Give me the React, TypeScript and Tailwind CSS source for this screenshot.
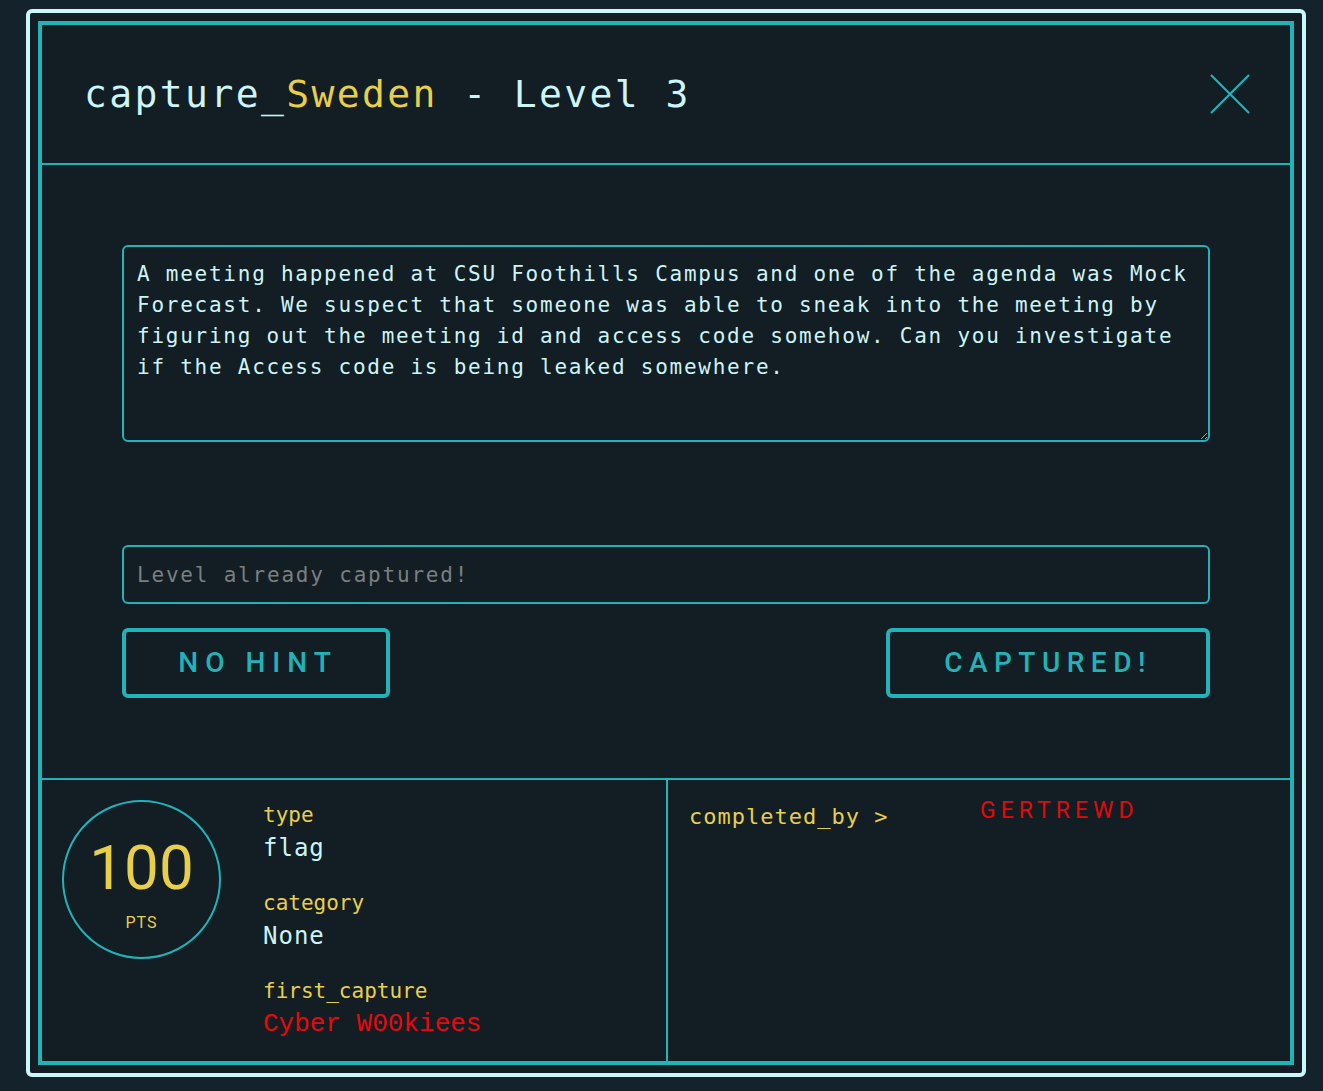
import React from "react";

const mono = "font-['DejaVu_Sans_Mono','Liberation_Mono',monospace]";
const block = "font-['Roboto','Liberation_Sans',sans-serif]";

const info = [
  { label: "type", value: "flag", cls: `${mono} text-[24px] tracking-[1px] text-[#cdf4f6]` },
  { label: "category", value: "None", cls: `${mono} text-[24px] tracking-[1px] text-[#cdf4f6]` },
  { label: "first_capture", value: "Cyber W00kiees", cls: "font-['Liberation_Mono',monospace] text-[26px] text-[#e8080a]" },
];

const completedBy = ["GERTREWD"];

function CloseIcon() {
  return (
    <svg width="40" height="40" viewBox="0 0 40 40" fill="none">
      <path d="M1 1 L39 39 M39 1 L1 39" stroke="#1fb3ba" strokeWidth="2.2" />
    </svg>
  );
}

export default function App() {
  return (
    <div className="min-h-screen w-full bg-[#14222b] pt-[9px] pl-[26px]">
      <div className="w-[1280px] h-[1068px] border-4 border-[#cbf6fa] rounded-md p-2 bg-[#121d24]">
        <div className="h-full border-4 border-[#1fb3ba] flex flex-col bg-[#121d24]">
          {/* header */}
          <div className="h-[140px] shrink-0 border-b-2 border-[#1fb3ba] flex items-center justify-between pl-[42px] pr-10">
            <h1 className={`${mono} text-[38px] tracking-[2.4px] text-[#cdf5f8] leading-none`}>
              capture_<span className="text-[#e8cf4a]">Sweden</span> - Level 3
            </h1>
            <button className="cursor-pointer">
              <CloseIcon />
            </button>
          </div>

          {/* body */}
          <div className="h-[613px] shrink-0 px-20 pt-20 flex flex-col">
            <textarea
              readOnly
              className={`${mono} h-[197px] w-full bg-transparent border-2 border-[#1fb3ba] rounded-md pl-[13px] pr-1 pt-3 text-[21px] tracking-[1.75px] leading-[31px] text-[#cdf4f6] outline-none resize-y`}
              value="A meeting happened at CSU Foothills Campus and one of the agenda was Mock Forecast. We suspect that someone was able to sneak into the meeting by figuring out the meeting id and access code somehow. Can you investigate if the Access code is being leaked somewhere."
            />
            <input
              disabled
              placeholder="Level already captured!"
              className={`${mono} mt-[103px] h-[59px] w-full bg-transparent border-2 border-[#1fb3ba] rounded-md px-[13px] text-[21px] tracking-[1.8px] text-[#cdf4f6] placeholder:text-[#7b7f80] outline-none`}
            />
            <div className="mt-6 flex justify-between">
              <button className={`${block} w-[268px] h-[70px] border-4 border-[#1fb3ba] rounded-md text-[#1fb3ba] text-[28px] font-medium tracking-[7px] pl-[4px]`}>
                NO HINT
              </button>
              <button className={`${block} w-[324px] h-[70px] border-4 border-[#1fb3ba] rounded-md text-[#1fb3ba] text-[28px] font-medium tracking-[6.5px]`}>
                CAPTURED!
              </button>
            </div>
          </div>

          {/* footer */}
          <div className="flex-1 border-t-2 border-[#1fb3ba] grid grid-cols-[624px_1fr]">
            <div className="flex pt-5 pl-5">
              <div className="w-[159px] h-[159px] rounded-full border-2 border-[#1fb3ba] flex flex-col items-center justify-center shrink-0">
                <span className={`${block} text-[62px] leading-none text-[#e8cf4a] mt-3`}>100</span>
                <span className={`${block} text-[16px] text-[#e8cf4a] mt-3 tracking-[1px]`}>PTS</span>
              </div>
              <div className="ml-[42px] flex flex-col gap-[22px]">
                {info.map((row) => (
                  <div key={row.label}>
                    <div className={`${mono} text-[21px] leading-[30px] text-[#e8cf4a]`}>{row.label}</div>
                    <div className={`${row.cls} leading-[36px]`}>{row.value}</div>
                  </div>
                ))}
              </div>
            </div>
            <div className="border-l-2 border-[#1fb3ba] flex pl-[21px] pt-5">
              <div className={`${mono} w-[291px] text-[22px] leading-[34px] tracking-[1px] text-[#e8cf4a]`}>
                completed_by &gt;
              </div>
              <div className="flex flex-col">
                {completedBy.map((name) => (
                  <span key={name} className={`${block} text-[23px] leading-[22px] tracking-[5px] text-[#e00a0a]`}>
                    {name}
                  </span>
                ))}
              </div>
            </div>
          </div>
        </div>
      </div>
    </div>
  );
}
